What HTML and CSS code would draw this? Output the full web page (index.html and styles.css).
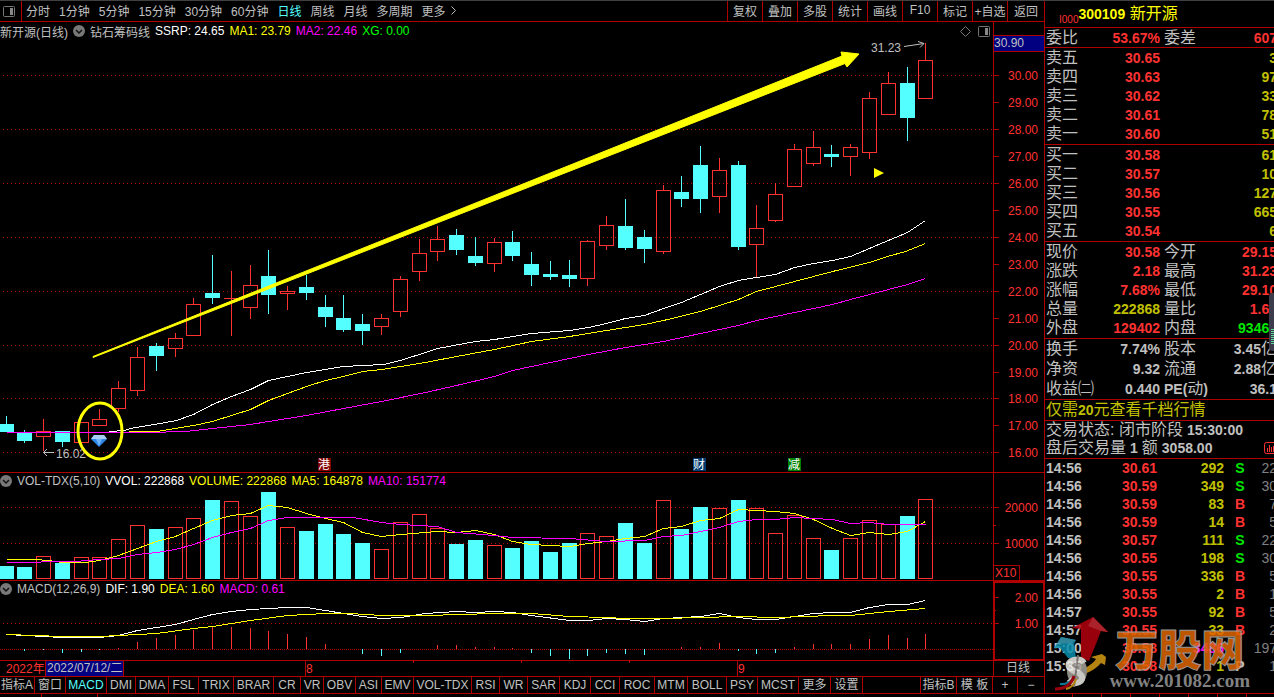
FILE: index.html
```html
<!DOCTYPE html>
<html lang="zh-CN">
<head>
    <meta charset="UTF-8">
    <meta name="viewport" content="width=device-width, initial-scale=1.0">
    <title>新开源 300109</title>
    <link rel="stylesheet" href="styles.css">
</head>
<body>
    <svg width="0" height="0" class="defs">
        <symbol id="chevron" viewBox="0 0 12 12">
            <circle cx="6" cy="6" r="6" fill="#787878"/>
            <path d="M3 5l3 3 3-3" fill="none" stroke="#111" stroke-width="1.5"/>
        </symbol>
        <symbol id="layout" viewBox="0 0 12 11">
            <rect x="0.5" y="0.5" width="11" height="10" rx="1" fill="none" stroke="#777"/>
            <rect x="7" y="2" width="3" height="7" fill="#888"/>
        </symbol>
    </svg>

    <div class="shell">
        <main class="left">
            <nav class="toolbar">
                <button class="layout-btn" aria-label="布局"><svg width="12" height="11"><use href="#layout"/></svg></button>
                <div class="periods">
                    <button>分时</button>
                    <button>1分钟</button>
                    <button>5分钟</button>
                    <button>15分钟</button>
                    <button>30分钟</button>
                    <button>60分钟</button>
                    <button class="active">日线</button>
                    <button>周线</button>
                    <button>月线</button>
                    <button>多周期</button>
                    <button class="more">更多
                        <svg width="5" height="9" viewBox="0 0 5 9"><path d="M0.5 0.5l4 4-4 4" fill="none" stroke="#c0c0c0"/></svg>
                    </button>
                </div>
                <div class="tools">
                    <button>复权</button>
                    <button>叠加</button>
                    <button>多股</button>
                    <button>统计</button>
                    <button>画线</button>
                    <button>F10</button>
                    <button>标记</button>
                    <button>+自选</button>
                    <button>返回</button>
                </div>
            </nav>

            <section class="pane">
                <header class="legend legend-main">
                    <span>新开源(日线)</span>
                    <svg width="12" height="12"><use href="#chevron"/></svg>
                    <span>钻石筹码线</span>
                    <span class="white">SSRP: 24.65</span>
                    <span class="yellow">MA1: 23.79</span>
                    <span class="magenta">MA2: 22.46</span>
                    <span class="lime">XG: 0.00</span>
                    <div class="corner">
                        <svg width="11" height="11" viewBox="0 0 11 11"><path d="M5.5 0.5l5 5-5 5-5-5z" fill="none" stroke="#777"/></svg>
                        <svg width="12" height="11"><use href="#layout"/></svg>
                    </div>
                </header>
                <svg id="kline" class="chart" viewBox="0 40 1044 432"></svg>
            </section>

            <section class="pane">
                <header class="legend">
                    <svg width="12" height="12"><use href="#chevron"/></svg>
                    <span>VOL-TDX(5,10)</span>
                    <span class="white">VVOL: 222868</span>
                    <span class="yellow">VOLUME: 222868</span>
                    <span class="yellow">MA5: 164878</span>
                    <span class="magenta">MA10: 151774</span>
                </header>
                <svg id="volume" class="chart" viewBox="0 489 1044 91"></svg>
            </section>

            <section class="pane">
                <header class="legend">
                    <svg width="12" height="12"><use href="#chevron"/></svg>
                    <span>MACD(12,26,9)</span>
                    <span class="white">DIF: 1.90</span>
                    <span class="yellow">DEA: 1.60</span>
                    <span class="magenta">MACD: 0.61</span>
                </header>
                <svg id="macd" class="chart" viewBox="0 597 1044 63"></svg>
            </section>

            <section class="pane">
                <svg id="dates" class="chart" viewBox="0 661 1044 15"></svg>
            </section>

            <nav class="tabs">
                <button>指标A</button>
                <button>窗口</button>
                <button class="active">MACD</button>
                <button>DMI</button>
                <button>DMA</button>
                <button>FSL</button>
                <button>TRIX</button>
                <button>BRAR</button>
                <button>CR</button>
                <button>VR</button>
                <button>OBV</button>
                <button>ASI</button>
                <button>EMV</button>
                <button>VOL-TDX</button>
                <button>RSI</button>
                <button>WR</button>
                <button>SAR</button>
                <button>KDJ</button>
                <button>CCI</button>
                <button>ROC</button>
                <button>MTM</button>
                <button>BOLL</button>
                <button>PSY</button>
                <button>MCST</button>
                <button>更多</button>
                <button>设置</button>
                <span class="spacer"></span>
                <button>指标B</button>
                <button>模 板</button>
                <button>+</button>
                <button>−</button>
            </nav>
        </main>

        <aside class="quote">
            <h1><small>I000</small><b>300109</b> 新开源</h1>

            <table class="block ratio">
                <colgroup><col class="c1"><col class="c2"><col class="c3"><col class="c4"></colgroup>
                <tr><th>委比</th><td class="red">53.67%</td><th>委差</th><td class="red">607</td></tr>
            </table>

            <table class="block">
                <colgroup><col class="c1"><col class="c2"><col class="c3"><col class="c4"></colgroup>
                <tr><th>卖五</th><td class="red">30.65</td><td></td><td class="gold">3</td></tr>
                <tr><th>卖四</th><td class="red">30.63</td><td></td><td class="gold">97</td></tr>
                <tr><th>卖三</th><td class="red">30.62</td><td></td><td class="gold">33</td></tr>
                <tr><th>卖二</th><td class="red">30.61</td><td></td><td class="gold">78</td></tr>
                <tr><th>卖一</th><td class="red">30.60</td><td></td><td class="gold">51</td></tr>
            </table>

            <table class="block">
                <colgroup><col class="c1"><col class="c2"><col class="c3"><col class="c4"></colgroup>
                <tr><th>买一</th><td class="red">30.58</td><td></td><td class="gold">61</td></tr>
                <tr><th>买二</th><td class="red">30.57</td><td></td><td class="gold">10</td></tr>
                <tr><th>买三</th><td class="red">30.56</td><td></td><td class="gold">127</td></tr>
                <tr><th>买四</th><td class="red">30.55</td><td></td><td class="gold">665</td></tr>
                <tr><th>买五</th><td class="red">30.54</td><td></td><td class="gold">6</td></tr>
            </table>

            <table class="block">
                <colgroup><col class="c1"><col class="c2"><col class="c3"><col class="c4"></colgroup>
                <tr><th>现价</th><td class="red">30.58</td><th>今开</th><td class="red">29.15</td></tr>
                <tr><th>涨跌</th><td class="red">2.18</td><th>最高</th><td class="red">31.23</td></tr>
                <tr><th>涨幅</th><td class="red">7.68%</td><th>最低</th><td class="red">29.10</td></tr>
                <tr><th>总量</th><td class="gold">222868</td><th>量比</th><td class="red">1.66</td></tr>
                <tr><th>外盘</th><td class="red">129402</td><th>内盘</th><td class="green">93466</td></tr>
            </table>

            <table class="block stats">
                <colgroup><col class="c1"><col class="c2"><col class="c3"><col class="c4"></colgroup>
                <tr><th>换手</th><td>7.74%</td><th>股本</th><td>3.45<i>亿</i></td></tr>
                <tr><th>净资</th><td>9.32</td><th>流通</th><td>2.88<i>亿</i></td></tr>
                <tr><th>收益㈡</th><td>0.440</td><th><b>PE(</b>动<b>)</b></th><td>36.1</td></tr>
            </table>

            <a class="promo" href="#">仅需<b>20</b>元查看千档行情</a>

            <div class="status">
                <p>交易状态: 闭市阶段 <b>15:30:00</b></p>
                <p>盘后交易量 <b>1</b> 额 <b>3058.00</b>
                    <svg class="mini" width="13" height="12" viewBox="0 0 13 12"><rect x="0.5" y="0.5" width="12" height="11" rx="2" fill="none" stroke="#ff3232"/><path d="M3.5 10V6M5.5 10V3M7.5 10V5M9.5 10V4" stroke="#ff3232"/></svg>
                </p>
            </div>

            <table class="trades">
                <colgroup><col class="t1"><col class="t2"><col class="t2"><col class="t3"><col class="t4"></colgroup>
                <tr><td>14:56</td><td class="red">30.61</td><td class="gold">292</td><td class="green">S</td><td>22</td></tr>
                <tr><td>14:56</td><td class="red">30.59</td><td class="gold">349</td><td class="green">S</td><td>30</td></tr>
                <tr><td>14:56</td><td class="red">30.59</td><td class="gold">83</td><td class="red">B</td><td>7</td></tr>
                <tr><td>14:56</td><td class="red">30.59</td><td class="gold">14</td><td class="red">B</td><td>5</td></tr>
                <tr><td>14:56</td><td class="red">30.57</td><td class="gold">111</td><td class="green">S</td><td>22</td></tr>
                <tr><td>14:56</td><td class="red">30.55</td><td class="gold">198</td><td class="green">S</td><td>30</td></tr>
                <tr><td>14:56</td><td class="red">30.55</td><td class="gold">336</td><td class="red">B</td><td>5</td></tr>
                <tr><td>14:56</td><td class="red">30.55</td><td class="gold">2</td><td class="red">B</td><td>1</td></tr>
                <tr><td>14:57</td><td class="red">30.55</td><td class="gold">92</td><td class="red">B</td><td>5</td></tr>
                <tr><td>14:57</td><td class="red">30.55</td><td class="gold">33</td><td class="red">B</td><td>2</td></tr>
                <tr><td>15:00</td><td class="red">30.58</td><td class="magenta">3486</td><td></td><td>197</td></tr>
                <tr><td>15:35</td><td class="red">30.58</td><td class="gold">1</td><td>P</td><td>1</td></tr>
            </table>

            <div class="gauge"></div>

            <div class="brand">
                <svg width="56" height="76" viewBox="0 0 56 76">
                    <path d="M39 0L54 15 47 14Q41 30 35 44L27 41 27 12 18 11Z" fill="#b3000f"/>
                    <path d="M39 0L54 15 47 14 34 9Z" fill="#c82a33"/>
                    <path d="M7 20L22 23 20 27 22 41 14 41 6 31 0 31Z" fill="#0b8fae"/>
                    <path d="M7 20L22 23 18 26 3 27Z" fill="#3a9db5"/>
                    <path d="M31 51Q40 46 42 42L37 40 48 37 52 40 51 48 47 46Q42 52 33 56Z" fill="#d59a12"/>
                    <ellipse cx="23" cy="54" rx="10" ry="14" fill="#a8a49d"/>
                    <path d="M30 46Q27 41 20 43 13 45 15 50 18 54 25 56 30 60 27 64 21 69 15 62" fill="none" stroke="#eeebe6" stroke-width="6"/>
                    <path d="M24 38L20 70" stroke="#8a8680" stroke-width="2"/>
                    <path d="M6 67Q14 68 20 61" fill="none" stroke="#0b8fae" stroke-width="2"/>
                    <path d="M1 72Q16 72 20 59" fill="none" stroke="#b3000f" stroke-width="3"/>
                    <path d="M12 72Q20 70 22 62" fill="none" stroke="#d59a12" stroke-width="2"/>
                </svg>
                <div class="brand-text">
                    <strong>万股网</strong>
                    <span>www.201082.com</span>
                </div>
            </div>
        </aside>
    </div>

    <footer class="strip">
        <span></span><span></span>
        <i></i><i></i><i></i><i></i><i></i><i></i><i></i>
    </footer>

    <script src="chart.js"></script>
</body>
</html>
```
FILE: styles.css
```css
* {
    box-sizing: border-box;
    margin: 0;
    padding: 0;
}

body {
    background-color: #000;
    color: #c0c0c0;
    font-family: "Liberation Sans", "Noto Sans CJK SC", sans-serif;
    font-size: 12px;
    border-top: 1px solid #404040;
    overflow: hidden;
}

button {
    background: none;
    border: none;
    color: inherit;
    font: inherit;
    white-space: nowrap;
    cursor: pointer;
}

.defs {
    position: absolute;
}

.shell {
    display: grid;
    grid-template-columns: minmax(0, 1fr) 230px;
}

.white { color: #fff; }
.yellow { color: #ff0; }
.gold { color: #c0c000; }
.magenta { color: #f0f; }
.lime { color: #0f0; }
.green { color: #00e600; }
.red { color: #ff3232; }
.active { color: #54ffff; }

/* toolbar */
.toolbar {
    display: flex;
    height: 21px;
    border-bottom: 1px solid #b00000;
}

.toolbar button {
    padding-bottom: 2px;
}

.toolbar .layout-btn {
    display: flex;
    align-items: center;
    width: 22px;
    padding-left: 3px;
    padding-bottom: 0;
    border-right: 1px solid #b00000;
}

.periods {
    display: flex;
    align-items: center;
    gap: 9px;
    padding-left: 4px;
}

.more {
    display: flex;
    align-items: center;
    gap: 5px;
}

.tools {
    display: flex;
    margin-left: auto;
}

.tools button {
    width: 35px;
    border-left: 1px solid #b00000;
}

.tools button:last-child {
    width: 37px;
}

/* chart panes */
.pane {
    border-bottom: 1px solid #b00000;
}

.legend {
    display: flex;
    align-items: center;
    gap: 5px;
    height: 16px;
    white-space: nowrap;
}

.legend-main {
    height: 18px;
}

.corner {
    display: flex;
    gap: 7px;
    margin-left: auto;
    padding-right: 54px;
}

.chart {
    display: block;
    width: 100%;
    height: auto;
    overflow: visible;
}

.chart text {
    font-size: 12px;
    fill: #ff3232;
}

.chart .note {
    fill: #c0c0c0;
}

.chart .badge {
    fill: #fff;
}

.crisp {
    shape-rendering: crispEdges;
}

.tabs {
    display: grid;
    grid-template-columns: 35px 31px 41px 29px 33px 30px 35px 40px 27px 23px 32px 26px 32px 58px 28px 28px 32px 31px 29px 35px 33px 39px 31px 41px 32px 32px 1fr 36px 36px 25px 26px;
    height: 16px;
}

.tabs > * {
    border-right: 1px solid #b00000;
    line-height: 16px;
}

.tabs > :last-child {
    border-right: none;
}

/* quote panel */
.quote {
    position: relative;
    overflow: hidden;
    border-left: 1px solid #b00000;
}

.quote b {
    font-size: 14px;
}

.quote h1 {
    height: 27px;
    padding-left: 14px;
    border-bottom: 1px solid #b00000;
    color: #ff0;
    font-size: 16px;
    font-weight: normal;
    line-height: 26px;
    white-space: nowrap;
}

.quote small {
    color: #ff3232;
    font-size: 10px;
    vertical-align: -4px;
    line-height: 10px;
}

table {
    width: 232px;
    table-layout: fixed;
    border-collapse: separate;
    border-spacing: 0;
    white-space: nowrap;
}

.block {
    height: 97px;
    border-bottom: 1px solid #b00000;
}

.ratio {
    height: 20px;
}

.stats {
    height: 61px;
}

.c1 { width: 50px; }
.c2 { width: 65px; }
.c3 { width: 46px; }
.c4 { width: 71px; }

.block th,
.block td {
    height: 19px;
    line-height: 18px;
    vertical-align: middle;
}

.block th {
    padding-left: 1px;
    font-size: 16px;
    font-weight: normal;
    text-align: left;
}

.block td + th {
    padding-left: 4px;
}

.block td {
    font-size: 14px;
    font-weight: bold;
    text-align: right;
}

.block i {
    font-size: 16px;
    font-style: normal;
    font-weight: normal;
    line-height: 16px;
}

.promo {
    display: block;
    height: 21px;
    padding-left: 1px;
    border-bottom: 1px solid #b00000;
    color: #c0c000;
    font-size: 16px;
    line-height: 20px;
    text-decoration: none;
    white-space: nowrap;
}

.status {
    height: 38px;
    padding-left: 1px;
    border-bottom: 1px solid #b00000;
    font-size: 16px;
    line-height: 18px;
}

.status p {
    display: flex;
    align-items: center;
    gap: 4px;
    width: 231px;
    white-space: nowrap;
}

.mini {
    margin-left: auto;
}

.t1 { width: 45px; }
.t2 { width: 67px; }
.t3 { width: 26px; }
.t4 { width: 27px; }

.trades td {
    height: 18px;
    font-size: 14px;
    font-weight: bold;
    line-height: 18px;
    text-align: right;
}

.trades td:first-child {
    padding-left: 1px;
    text-align: left;
}

.trades td:nth-child(4) {
    padding-left: 6px;
    text-align: center;
}

.trades td:last-child {
    color: #808080;
    font-weight: normal;
}

/* floating volume gauge on the right edge */
.gauge {
    position: absolute;
    top: 292px;
    right: 0;
    width: 5px;
    height: 58px;
    padding: 36px 0 0 2px;
    border-radius: 4px 0 0 4px;
    background-color: #3c3c4c;
}

.gauge::before {
    content: "";
    display: block;
    height: 16px;
    background: repeating-linear-gradient(#5fd8a0 0 1px, #3c3c4c 1px 2px);
}

.brand {
    position: absolute;
    right: 24px;
    bottom: 0;
    display: flex;
    opacity: 0.85;
    pointer-events: none;
}

.brand-text {
    display: flex;
    flex-direction: column;
    align-items: center;
    padding-top: 13px;
}

.brand-text strong {
    color: #e06500;
    font-size: 43px;
    font-weight: 900;
    line-height: 42px;
    -webkit-text-stroke: 1px #b0b0b0;
}

.brand-text span {
    color: #999;
    font-family: "Liberation Serif", serif;
    font-size: 19px;
    font-weight: bold;
    line-height: 18px;
}

.strip {
    display: flex;
    height: 4px;
    border-top: 1px solid #b00000;
}

.strip span,
.strip i {
    width: 29px;
    border-right: 1px solid #b00000;
}

.strip span:first-child {
    width: 42px;
}

.strip span:nth-child(2) {
    width: 56px;
    margin-right: auto;
}

.strip i:last-child {
    margin-right: 27px;
}
```
FILE: chart.js
```js
const NS = 'http://www.w3.org/2000/svg';
const RED = '#ff3232';
const CYAN = '#54ffff';
const LINE = '#b00000';
const AXIS = 993;

// high, body top, body bottom, low, 1 = up, volume top, macd bar
const days = [
    [416, 424, 432, 432, 0, 566, 0],
    [430, 432, 441, 443, 0, 567, -2],
    [419, 431, 437, 451, 1, 556, -1],
    [431, 431, 442, 447, 0, 563, -4],
    [422, 422, 443, 443, 1, 557, -3],
    [409, 419, 426, 426, 1, 557, -1],
    [381, 388, 409, 412, 1, 539, 1],
    [347, 357, 391, 396, 1, 525, 7],
    [343, 346, 356, 371, 0, 529, 11],
    [333, 338, 349, 357, 1, 527, 14],
    [298, 304, 336, 336, 1, 518, 19],
    [255, 293, 298, 304, 0, 500, 23],
    [271, 298, 299, 336, 1, 501, 22],
    [265, 285, 308, 319, 1, 516, 21],
    [250, 276, 295, 314, 0, 492, 18],
    [286, 291, 294, 310, 1, 527, 15],
    [275, 287, 293, 300, 0, 531, 12],
    [295, 307, 317, 327, 0, 524, 5],
    [295, 318, 330, 332, 0, 534, 0],
    [314, 324, 331, 345, 0, 543, -5],
    [314, 318, 327, 335, 1, 549, -7],
    [276, 279, 312, 317, 1, 522, -4],
    [239, 253, 272, 281, 1, 514, 0],
    [226, 239, 252, 261, 1, 528, 4],
    [229, 235, 250, 255, 0, 544, 4],
    [237, 256, 263, 266, 0, 540, 2],
    [238, 242, 264, 272, 1, 545, 2],
    [231, 242, 256, 261, 0, 548, 1],
    [252, 264, 275, 286, 0, 541, -4],
    [261, 274, 277, 280, 0, 552, -7],
    [260, 275, 279, 287, 0, 543, -10],
    [240, 241, 279, 286, 1, 533, -7],
    [216, 225, 246, 250, 1, 536, -4],
    [199, 226, 248, 250, 0, 523, -5],
    [230, 237, 249, 263, 0, 543, -6],
    [185, 190, 252, 254, 1, 500, 0],
    [176, 192, 199, 207, 0, 529, 2],
    [146, 165, 199, 213, 0, 507, 2],
    [158, 170, 197, 213, 1, 508, 6],
    [161, 165, 247, 250, 0, 500, -2],
    [205, 228, 245, 277, 1, 508, -5],
    [183, 194, 221, 222, 1, 533, -4],
    [144, 149, 187, 187, 1, 515, 2],
    [131, 147, 164, 166, 1, 538, 5],
    [145, 154, 157, 167, 0, 550, 5],
    [144, 147, 157, 176, 1, 538, 5],
    [92, 98, 153, 159, 1, 520, 10],
    [72, 83, 115, 115, 1, 524, 14],
    [67, 83, 118, 141, 0, 516, 11],
    [43, 60, 99, 99, 1, 499, 15]
];

const lines = {
    ssrp: '109,431 124,430 130,428 160,423 176,420 193,414 212,404 231,396 250,389 268,380 287,376 306,372 325,369 343,366 362,365 383,364 400,360 425,352 437,348 475,341 494,339 531,333 569,330 588,327 606,323 625,318 644,315 663,308 681,302 700,294 719,286 738,280 756,277 775,274 794,267 813,263 832,260 850,256 883,242 907,232 925,220',
    ma1: '128,431 156,431 175,428 193,425 212,421 231,415 250,409 268,400 287,393 306,386 325,380 343,376 362,371 381,369 400,366 425,362 456,356 494,349 531,341 569,336 606,330 644,324 663,320 700,311 738,299 756,291 794,281 832,271 869,262 887,256 905,251 925,243',
    ma2: '6,432 147,432 185,431 212,428 250,424 268,421 306,415 343,408 381,401 425,392 456,385 494,376 512,370 550,362 588,354 625,347 663,341 700,333 738,325 756,320 794,312 832,304 850,299 888,289 907,284 925,278',
    vol5: '6,559 34,559 48,560 62,562 85,562 99,560 118,555 137,548 156,541 175,536 193,528 212,520 231,515 250,513 268,505 287,507 306,513 325,518 343,522 362,532 381,536 400,534 425,532 437,531 456,532 475,530 494,534 512,541 531,544 569,546 588,543 606,541 625,538 644,536 663,528 681,526 700,520 719,518 738,509 756,510 775,511 794,513 813,519 832,528 850,535 869,532 888,534 907,531 925,521',
    vol10: '6,562 34,562 48,561 75,561 99,559 118,558 137,554 156,552 175,549 193,544 212,537 231,532 250,528 268,520 287,517 353,517 381,522 400,524 437,526 456,532 494,535 512,537 569,538 606,541 644,540 663,536 681,535 700,531 719,527 738,521 756,519 775,519 794,517 832,519 850,523 869,522 888,524 925,524',
    dif: '6,634 62,637 99,637 118,635 137,630 156,627 175,624 193,619 212,614 231,611 250,609 287,607 306,607 325,610 343,613 362,616 381,618 400,617 425,613 456,611 475,612 494,611 512,612 531,615 569,620 588,620 606,618 625,619 644,621 663,618 700,616 719,613 738,617 756,619 775,619 794,616 813,613 832,612 850,612 869,607 888,604 907,604 925,600',
    dea: '6,634 62,636 99,636 118,635 156,633 193,628 212,626 250,620 287,615 325,613 350,613 381,615 425,615 494,613 531,613 569,616 606,617 625,618 663,618 700,617 738,616 775,617 832,615 850,615 888,611 925,608'
};

function add(parent, name, attrs, text) {
    const el = document.createElementNS(NS, name);
    for (const key in attrs) el.setAttribute(key, attrs[key]);
    if (text) el.textContent = text;
    parent.appendChild(el);
    return el;
}

function group(id) {
    return add(document.getElementById(id), 'g', { class: 'crisp' });
}

function fill(g, x, y, w, h, color) {
    add(g, 'rect', { x, y, width: w, height: h, fill: color });
}

function hollow(g, x, y, w, h, color) {
    add(g, 'rect', { x: x + 0.5, y: y + 0.5, width: w - 1, height: h - 1, fill: 'none', stroke: color });
}

function dots(g, y, gap, start) {
    add(g, 'line', { x1: start, y1: y + 0.5, x2: AXIS, y2: y + 0.5, stroke: LINE, 'stroke-dasharray': '1 ' + gap });
}

function curve(g, points, color) {
    add(g, 'polyline', { points, fill: 'none', stroke: color, transform: 'translate(0.5 0.5)' });
}

function label(g, x, y, text, cls, anchor) {
    add(g, 'text', { x, y, class: cls || '', 'text-anchor': anchor || 'start' }, text);
}

function tick(g, y, text) {
    fill(g, AXIS, y, text ? 6 : 3, 1, LINE);
    if (text) label(g, 1038, y + 5, text, '', 'end');
}

function dayX(i) {
    return Math.floor(6.1 + 18.77 * i);
}

function bar(g, i, top, bottom, up) {
    if (!up) fill(g, dayX(i) - 7, top, 15, bottom - top, CYAN);
    else if (bottom - top < 2) fill(g, dayX(i) - 7, top, 15, 1, RED);
    else hollow(g, dayX(i) - 7, top, 15, bottom - top, RED);
}

function drawKline() {
    const g = group('kline');
    fill(g, AXIS, 22, 1, 450, LINE);
    for (let i = 0; i < 15; i++) {
        const y = 75 + Math.ceil(26.91 * i);
        if (i % 2 === 0) dots(g, y, 3, 3);
        tick(g, y, (30 - i).toFixed(2));
    }
    fill(g, AXIS + 1, 35, 50, 17, LINE);
    fill(g, AXIS + 1, 36, 50, 15, '#000080');
    label(g, 994, 47, '30.90', 'note');

    days.forEach(([high, top, bottom, low, up], i) => {
        const color = up ? RED : CYAN;
        fill(g, dayX(i), high, 1, top - high, color);
        fill(g, dayX(i), bottom, 1, low - bottom, color);
        bar(g, i, top, bottom, up);
    });
    curve(g, lines.ma2, '#f0f');
    curve(g, lines.ma1, '#ff0');
    curve(g, lines.ssrp, '#fff');

    // high / low notes
    const s = document.getElementById('kline');
    label(s, 871, 52, '31.23', 'note');
    add(s, 'path', { d: 'M904 46.5L924 43.5M918 41.5l6 2-4 4', stroke: '#c0c0c0', fill: 'none' });
    label(s, 56, 458, '16.02', 'note');
    add(s, 'path', { d: 'M54 452.5H43.5M47 449l-3.500 3.500 3.500 3.500', stroke: '#c0c0c0', fill: 'none' });

    // event badges
    [[318, '港', '#800000'], [693, '财', '#003a70'], [788, '减', '#008000']].forEach(([x, text, color]) => {
        fill(s, x, 458, 13, 13, color);
        label(s, x + 6, 469, text, 'badge', 'middle');
    });

    // buy signal
    add(s, 'path', { d: 'M94 435h10l3 4-8 8-8-8z', fill: '#2f86e8' });
    add(s, 'path', { d: 'M94 435h10l3 4H91z', fill: '#a8cdf5' });
    add(s, 'path', { d: 'M96 439h6l-3 7z', fill: '#6db4fa' });
    add(s, 'path', { d: 'M874 168l10 5-10 5z', fill: '#ff0' });
    add(s, 'ellipse', { cx: 100, cy: 431, rx: 22, ry: 28, fill: 'none', stroke: '#ff0', 'stroke-width': 3 });
    add(s, 'path', { d: 'M93 356.500L842 56 841 52 859 54 847 67 845 63.500 93 357.500z', fill: '#ff0', stroke: '#ff0' });
}

function drawVolume() {
    const g = group('volume');
    fill(g, AXIS, 473, 1, 107, LINE);
    dots(g, 507, 3, 3);
    dots(g, 543, 3, 3);
    tick(g, 507, '20000');
    tick(g, 525);
    tick(g, 543, '10000');
    hollow(g, AXIS, 565, 27, 16, LINE);
    label(g, 995, 577, 'X10');
    days.forEach((d, i) => bar(g, i, d[5], 579, d[4]));
    curve(g, lines.vol5, '#ff0');
    curve(g, lines.vol10, '#f0f');
}

function drawMacd() {
    const g = group('macd');
    add(g, 'rect', { x: AXIS + 1, y: 582, width: 50, height: 78, fill: 'none', stroke: LINE, 'stroke-width': 2 });
    dots(g, 623, 3, 3);
    dots(g, 649, 1, 0);
    tick(g, 597, '2.00');
    tick(g, 610);
    tick(g, 623, '1.00');
    days.forEach((d, i) => {
        if (d[6] > 0) fill(g, dayX(i), 649 - d[6], 1, d[6], RED);
        if (d[6] < 0) fill(g, dayX(i), 649, 1, -d[6], CYAN);
    });
    curve(g, lines.dif, '#fff');
    curve(g, lines.dea, '#ff0');
}

function drawDates() {
    const g = group('dates');
    label(g, 6, 673, '2022年');
    fill(g, 46, 661, 77, 15, '#000080');
    fill(g, 45, 661, 1, 15, LINE);
    fill(g, 123, 661, 1, 15, LINE);
    label(g, 47, 672, '2022/07/12/二', 'note');
    [[305, '8'], [737, '9']].forEach(([x, month]) => {
        fill(g, x, 661, 1, 15, LINE);
        label(g, x + 1, 673, month);
    });
    [413, 521, 629].forEach(x => fill(g, x, 661, 1, 2, LINE));
    fill(g, AXIS, 661, 1, 15, LINE);
    label(g, 1006, 672, '日线', 'note');
}

drawKline();
drawVolume();
drawMacd();
drawDates();
```
